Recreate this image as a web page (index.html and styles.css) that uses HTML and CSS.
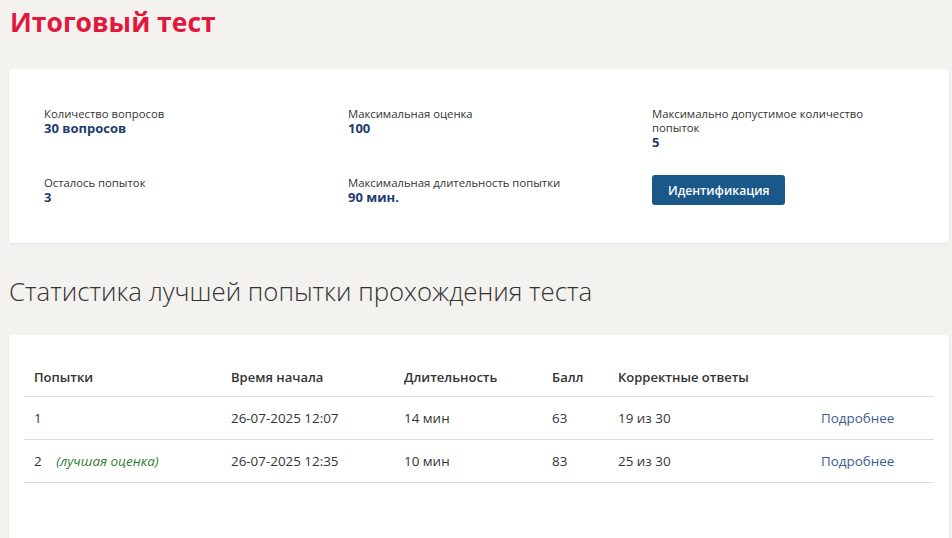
FILE: index.html
```html
<!DOCTYPE html>
<html lang="ru">

<head>
    <meta charset="UTF-8">
    <meta name="viewport" content="width=device-width, initial-scale=1.0">
    <title>Итоговый тест</title>
    <link rel="stylesheet" href="styles.css">
</head>

<body>
    <main class="page">
        <h1 class="page-title">Итоговый тест</h1>

        <section class="card test-info">
            <div class="info-item">
                <div class="info-label">Количество вопросов</div>
                <div class="info-value">30 вопросов</div>
            </div>
            <div class="info-item">
                <div class="info-label">Максимальная оценка</div>
                <div class="info-value">100</div>
            </div>
            <div class="info-item info-narrow">
                <div class="info-label">Максимально допустимое количество попыток</div>
                <div class="info-value">5</div>
            </div>
            <div class="info-item">
                <div class="info-label">Осталось попыток</div>
                <div class="info-value">3</div>
            </div>
            <div class="info-item">
                <div class="info-label">Максимальная длительность попытки</div>
                <div class="info-value">90 мин.</div>
            </div>
            <div class="info-item">
                <button type="button" class="btn-primary">Идентификация</button>
            </div>
        </section>

        <h2 class="section-title">Статистика лучшей попытки прохождения теста</h2>

        <section class="card attempts">
            <table class="attempts-table">
                <thead>
                    <tr>
                        <th class="col-num">Попытки</th>
                        <th class="col-start">Время начала</th>
                        <th class="col-dur">Длительность</th>
                        <th class="col-score">Балл</th>
                        <th class="col-correct">Корректные ответы</th>
                        <th></th>
                    </tr>
                </thead>
                <tbody>
                    <tr>
                        <td>1</td>
                        <td>26-07-2025 12:07</td>
                        <td>14 мин</td>
                        <td>63</td>
                        <td>19 из 30</td>
                        <td><a href="#" class="more-link">Подробнее</a></td>
                    </tr>
                    <tr>
                        <td>2 <span class="best-mark">(лучшая оценка)</span></td>
                        <td>26-07-2025 12:35</td>
                        <td>10 мин</td>
                        <td>83</td>
                        <td>25 из 30</td>
                        <td><a href="#" class="more-link">Подробнее</a></td>
                    </tr>
                </tbody>
            </table>
        </section>
    </main>
</body>

</html>
```

FILE: styles.css
```css
body {
    margin: 0;
    background: #f3f2ef;
    font-family: "Open Sans", Arial, sans-serif;
    color: #333;
}

.page {
    padding: 0 3px 0 9px;
}

.page-title {
    margin: 0;
    padding: 4px 0 0 1px;
    font-size: 26.5px;
    line-height: 36px;
    font-weight: 700;
    color: #e2173d;
}

.card {
    background: #fff;
    border-radius: 4px;
    box-shadow: 0 1px 2px rgba(0, 0, 0, 0.08);
}

.test-info {
    margin-top: 29px;
    padding: 38px 35px;
    display: grid;
    grid-template-columns: 304px 304px 1fr;
    row-gap: 27px;
}

.info-label {
    font-size: 11.3px;
    line-height: 14px;
}

.info-value {
    font-size: 13px;
    line-height: 14px;
    font-weight: 700;
    color: #1d3c6e;
}

.info-narrow {
    max-width: 225px;
}

.btn-primary {
    margin-top: -1px;
    height: 30px;
    padding: 0 16px;
    border: none;
    border-radius: 3px;
    background: #1a5889;
    color: #fff;
    font-family: inherit;
    font-size: 12.2px;
    font-weight: 600;
    cursor: pointer;
}

.section-title {
    margin: 0;
    padding: 32px 0 0;
    font-size: 25.8px;
    line-height: 32px;
    font-weight: 300;
    color: #333;
}

.attempts {
    margin-top: 28px;
    padding: 22px 15px;
    min-height: 200px;
}

.attempts-table {
    width: 100%;
    border-collapse: collapse;
    font-size: 13.4px;
}

.attempts-table th,
.attempts-table td {
    text-align: left;
    padding: 12px 10px 11px;
    line-height: 19px;
    border-bottom: 1px solid #ddd;
}

.attempts-table th {
    font-size: 13px;
    font-weight: 600;
    padding-top: 11px;
    padding-bottom: 9px;
}

.col-num { width: 177px; }
.col-start { width: 153px; }
.col-dur { width: 128px; }
.col-score { width: 46px; }
.col-correct { width: 183px; }

.best-mark {
    margin-left: 11px;
    font-style: italic;
    color: #2e7d32;
}

.more-link {
    color: #3a5c8e;
    text-decoration: none;
}
```
